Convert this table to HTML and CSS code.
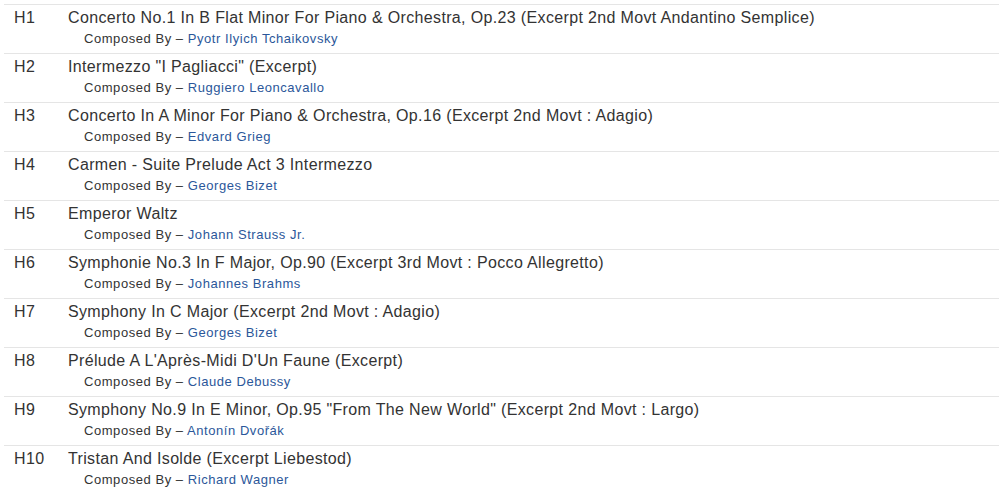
FILE: index.html
```html
<!DOCTYPE html>
<html>
<head>
<meta charset="utf-8">
<link rel="stylesheet" href="styles.css">
</head>
<body>
<div class="tracklist">
  <div class="track">
    <div class="pos">H1</div>
    <div class="info">
      <div class="title">Concerto No.1 In B Flat Minor For Piano &amp; Orchestra, Op.23 (Excerpt 2nd Movt Andantino Semplice)</div>
      <div class="credit">Composed By – <a class="artist">Pyotr Ilyich Tchaikovsky</a></div>
    </div>
  </div>
  <div class="track">
    <div class="pos">H2</div>
    <div class="info">
      <div class="title">Intermezzo "I Pagliacci" (Excerpt)</div>
      <div class="credit">Composed By – <a class="artist">Ruggiero Leoncavallo</a></div>
    </div>
  </div>
  <div class="track">
    <div class="pos">H3</div>
    <div class="info">
      <div class="title">Concerto In A Minor For Piano &amp; Orchestra, Op.16 (Excerpt 2nd Movt : Adagio)</div>
      <div class="credit">Composed By – <a class="artist">Edvard Grieg</a></div>
    </div>
  </div>
  <div class="track">
    <div class="pos">H4</div>
    <div class="info">
      <div class="title">Carmen - Suite Prelude Act 3 Intermezzo</div>
      <div class="credit">Composed By – <a class="artist">Georges Bizet</a></div>
    </div>
  </div>
  <div class="track">
    <div class="pos">H5</div>
    <div class="info">
      <div class="title">Emperor Waltz</div>
      <div class="credit">Composed By – <a class="artist">Johann Strauss Jr.</a></div>
    </div>
  </div>
  <div class="track">
    <div class="pos">H6</div>
    <div class="info">
      <div class="title">Symphonie No.3 In F Major, Op.90 (Excerpt 3rd Movt : Pocco Allegretto)</div>
      <div class="credit">Composed By – <a class="artist">Johannes Brahms</a></div>
    </div>
  </div>
  <div class="track">
    <div class="pos">H7</div>
    <div class="info">
      <div class="title">Symphony In C Major (Excerpt 2nd Movt : Adagio)</div>
      <div class="credit">Composed By – <a class="artist">Georges Bizet</a></div>
    </div>
  </div>
  <div class="track">
    <div class="pos">H8</div>
    <div class="info">
      <div class="title">Prélude A L'Après-Midi D'Un Faune (Excerpt)</div>
      <div class="credit">Composed By – <a class="artist">Claude Debussy</a></div>
    </div>
  </div>
  <div class="track">
    <div class="pos">H9</div>
    <div class="info">
      <div class="title">Symphony No.9 In E Minor, Op.95 "From The New World" (Excerpt 2nd Movt : Largo)</div>
      <div class="credit">Composed By – <a class="artist">Antonín Dvořák</a></div>
    </div>
  </div>
  <div class="track">
    <div class="pos">H10</div>
    <div class="info">
      <div class="title">Tristan And Isolde (Excerpt Liebestod)</div>
      <div class="credit">Composed By – <a class="artist">Richard Wagner</a></div>
    </div>
  </div>
</div>
</body>
</html>
```
FILE: styles.css
```css
html, body {
  margin: 0;
  padding: 0;
  background: #fff;
}
body {
  font-family: "Liberation Sans", Arial, sans-serif;
  color: #333;
}
.tracklist {
  padding: 4px 0 0 4px;
}
.track {
  display: flex;
  border-top: 1px solid #e5e5e5;
  padding: 3px 0 6px 10px;
}
.pos {
  width: 54px;
  flex: none;
  font-size: 16px;
  line-height: 20px;
  letter-spacing: 0.35px;
}
.info {
  flex: 1;
}
.title {
  font-size: 16px;
  line-height: 20px;
  letter-spacing: 0.35px;
}
.credit {
  margin: 3px 0 0 16px;
  font-size: 13px;
  line-height: 16px;
  letter-spacing: 0.55px;
}
.artist {
  color: #2b579a;
  text-decoration: none;
}
```
